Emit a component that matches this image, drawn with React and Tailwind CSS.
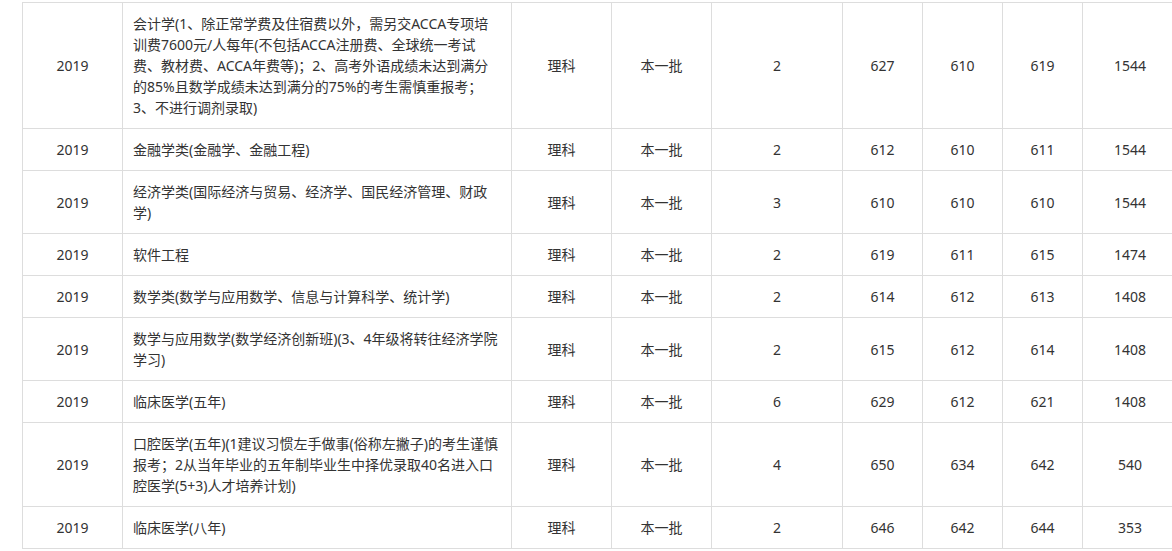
const ROWS = [
  {
    year: '2019',
    lines: [
      '会计学(1、除正常学费及住宿费以外，需另交ACCA专项培',
      '训费7600元/人每年(不包括ACCA注册费、全球统一考试',
      '费、教材费、ACCA年费等)；2、高考外语成绩未达到满分',
      '的85%且数学成绩未达到满分的75%的考生需慎重报考；',
      '3、不进行调剂录取)',
    ],
    type: '理科', batch: '本一批', plan: '2', max: '627', min: '610', avg: '619', rank: '1544',
  },
  { year: '2019', lines: ['金融学类(金融学、金融工程)'], type: '理科', batch: '本一批', plan: '2', max: '612', min: '610', avg: '611', rank: '1544' },
  { year: '2019', lines: ['经济学类(国际经济与贸易、经济学、国民经济管理、财政', '学)'], type: '理科', batch: '本一批', plan: '3', max: '610', min: '610', avg: '610', rank: '1544' },
  { year: '2019', lines: ['软件工程'], type: '理科', batch: '本一批', plan: '2', max: '619', min: '611', avg: '615', rank: '1474' },
  { year: '2019', lines: ['数学类(数学与应用数学、信息与计算科学、统计学)'], type: '理科', batch: '本一批', plan: '2', max: '614', min: '612', avg: '613', rank: '1408' },
  { year: '2019', lines: ['数学与应用数学(数学经济创新班)(3、4年级将转往经济学院', '学习)'], type: '理科', batch: '本一批', plan: '2', max: '615', min: '612', avg: '614', rank: '1408' },
  { year: '2019', lines: ['临床医学(五年)'], type: '理科', batch: '本一批', plan: '6', max: '629', min: '612', avg: '621', rank: '1408' },
  {
    year: '2019',
    lines: [
      '口腔医学(五年)(1建议习惯左手做事(俗称左撇子)的考生谨慎',
      '报考；2从当年毕业的五年制毕业生中择优录取40名进入口',
      '腔医学(5+3)人才培养计划)',
    ],
    type: '理科', batch: '本一批', plan: '4', max: '650', min: '634', avg: '642', rank: '540',
  },
  { year: '2019', lines: ['临床医学(八年)'], type: '理科', batch: '本一批', plan: '2', max: '646', min: '642', avg: '644', rank: '353' },
];

const cell = 'border border-[#dddddd] px-[10px] py-[10px] align-middle';

export default function App() {
  return (
    <div
      className="w-[1172px] h-[551px] overflow-hidden bg-white pl-[22px] pt-[2px] text-[14px] leading-[21px] text-[#333333]"
      style={{ fontFamily: '"Noto Sans", "Noto Sans CJK SC", sans-serif' }}
    >
      <table className="border-collapse table-fixed w-[1155px]">
        <colgroup>
          <col className="w-[100px]" />
          <col className="w-[389px]" />
          <col className="w-[100px]" />
          <col className="w-[100px]" />
          <col className="w-[131px]" />
          <col className="w-[80px]" />
          <col className="w-[80px]" />
          <col className="w-[80px]" />
          <col className="w-[95px]" />
        </colgroup>
        <tbody>
          {ROWS.map((r, i) => (
            <tr key={i}>
              <td className={cell + ' text-center'}>{r.year}</td>
              <td className={cell + ' text-left whitespace-nowrap'}>
                {r.lines.map((l, j) => (
                  <div key={j}>{l}</div>
                ))}
              </td>
              <td className={cell + ' text-center'}>{r.type}</td>
              <td className={cell + ' text-center'}>{r.batch}</td>
              <td className={cell + ' text-center'}>{r.plan}</td>
              <td className={cell + ' text-center'}>{r.max}</td>
              <td className={cell + ' text-center'}>{r.min}</td>
              <td className={cell + ' text-center'}>{r.avg}</td>
              <td className={cell + ' text-center'}>{r.rank}</td>
            </tr>
          ))}
        </tbody>
      </table>
    </div>
  );
}
